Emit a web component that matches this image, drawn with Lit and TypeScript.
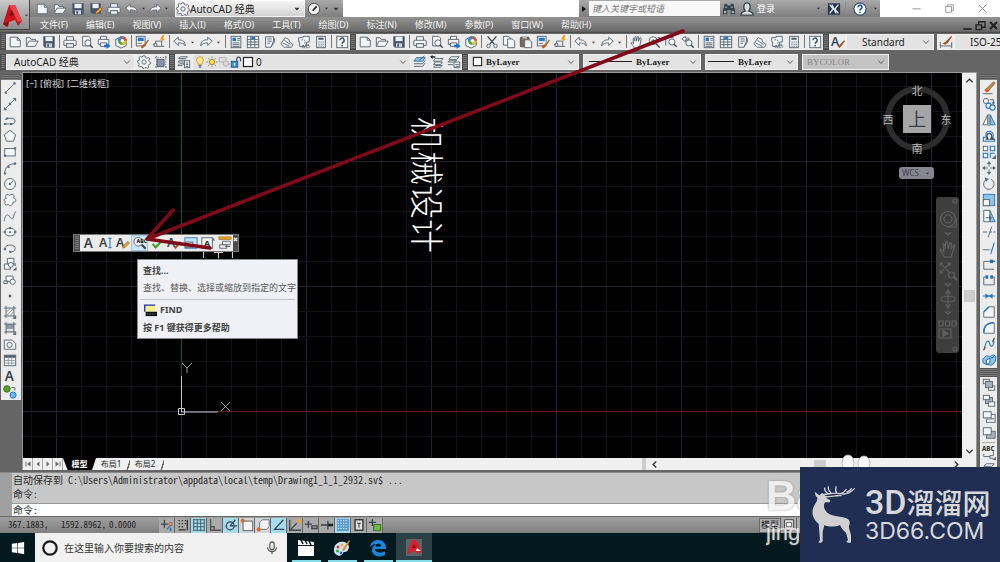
import { LitElement, html, svg, css, nothing, type SVGTemplateResult } from "lit";
import { customElement } from "lit/decorators.js";
import { classMap } from "lit/directives/class-map.js";

/* Every glyph is drawn on a 16 x 16 canvas. d = dark outline, b = blue outline, w = light fill. */
const glyphs: Record<string, SVGTemplateResult> = {
  new: svg`<path class="d w" d="M2.5 2.5h8l3.5 3.5v7.5h-11.5z"/><path class="d" d="M10.5 2.5v3.5h3.5"/>`,
  open: svg`<path class="d w" d="M1.5 13V3h4l1.5 2h5v2"/><path class="d w" d="M1.5 13l3-6h10.5l-3.5 6z"/>`,
  save: svg`<path d="M1.5 1.5h13v13h-11l-2-2z" fill="#46566a"/><rect x="4" y="2" width="8" height="5" fill="#eef1f4"/><rect x="4.5" y="9.5" width="7" height="4.5" fill="#c9d0d8"/><rect x="6" y="10.5" width="2" height="3" fill="#46566a"/>`,
  saveas: svg`<path d="M1.5 1.5h12v12h-10l-2-2z" fill="#46566a"/><rect x="4" y="2" width="7" height="5" fill="#eef1f4"/><path d="M7 14l1-3 5-5 2 2-5 5z" fill="#f0a030" stroke="#7a4a10" stroke-width=".6"/>`,
  print: svg`<path class="d w" d="M4 6V2h8v4M2 6h12a1 1 0 0 1 1 1v5h-3v-2H4v2H1V7a1 1 0 0 1 1-1z"/><rect class="d w" x="4" y="10" width="8" height="4"/>`,
  preview: svg`<path class="d w" d="M3 1.5h7l2 2v9H3z"/><circle class="d w" cx="9" cy="9" r="3.5"/><path class="d2" d="M11.5 11.5l3 3"/>`,
  publish: svg`<path class="d w" d="M4 5V1.500h7V5M1.500 5h12v6h-12z"/><path class="d w" d="M4 9h7v4H4z"/><path d="M8 11h3V9l4.500 3.500L11 16v-2H8z" fill="#1f6fd0"/>`,
  dwf: svg`<path class="d w" d="M2 5l6-3 6 3v7l-6 3-6-3z"/><circle cx="9.5" cy="6.5" r="5" fill="#4aa84a"/><path d="M9.5 6.5V1.500a5 5 0 0 1 5 5z" fill="#e05030"/><path d="M9.5 6.5h5a5 5 0 0 1-5 5z" fill="#f0c030"/><path d="M9.5 6.5h-5a5 5 0 0 1 5-5z" fill="#3a80d8"/><circle cx="9.5" cy="6.5" r="2" fill="#fff"/>`,
  match: svg`<rect class="d w" x="1.5" y="1.5" width="10" height="11"/><rect x="3" y="3" width="7" height="4" fill="#2b7ac0"/><path class="d" d="M3 9.5h5"/><path d="M7 12l4-2 4-5 1 1-4 6-3 3H7z" fill="#b0652a"/>`,
  block: svg`<path class="d" d="M1 11h3V7h7v6h-7M11 13h3"/><rect x="2.5" y="10" width="3" height="3" class="d w"/><path d="M12 0l-3 5h2.5l-1 4 4.5-5h-2.5l2-4z" fill="#f0a020"/>`,
  undo: svg`<path class="d w" d="M1 7l5-4.500v3c5 0 8 1.500 8 7-1.500-3-4-3.500-8-3.500v3z"/>`,
  redo: svg`<path class="d w" d="M15 7l-5-4.500v3c-5 0-8 1.500-8 7 1.500-3 4-3.500 8-3.500v3z"/>`,
  drop: svg`<path d="M3 5.500h10L8 11z" fill="#333"/>`,
  props: svg`<rect class="d w" x="2.5" y="1.5" width="11" height="13"/><rect x="4" y="3" width="4" height="4" fill="#1f78c8"/><path class="d" d="M9.5 4h3M9.5 6h3M4 9h8M4 11h8M4 13h8"/>`,
  dcenter: svg`<rect class="d w" x="1.5" y="1.5" width="13" height="13"/><path class="d" d="M5.500 2v12M10 2v12M1.500 5h13M1.500 8h13M1.500 11h13"/><rect x="6" y="2" width="4" height="3" fill="#2b7ac0"/>`,
  palette: svg`<path class="d w" d="M3 2h9v5l-3 7H3z"/><path class="d" d="M5 4.500h5M5 7h5M5 9.500h3M9 14l4-6V4h-1"/>`,
  sheet: svg`<path class="d w" d="M1 10l5-7 4 2 1 3 4 3-2 3H5z"/><path class="d" d="M3 9l8 4M5 6l7 5"/>`,
  markup: svg`<path class="d w" d="M2 3h5V1.500h7V8h-3v5H3V8H2z"/><path class="d" d="M5 6c3-2 5 0 4 3s4 3 5 1M6 12h8v2.500H6z" stroke-dasharray="2 1"/>`,
  calc: svg`<rect class="d w" x="3" y="1.5" width="10" height="13"/><rect x="5" y="3" width="6" height="2.5" fill="#56646f"/><path class="d" d="M5 8h1.500M7.500 8H9M10 8h1.500M5 10.500h1.500M7.500 10.500H9M10 10.500h1.500M5 12.800h1.500M7.500 12.800H9M10 12.800h1.500"/>`,
  help: svg`<rect class="d w" x="2" y="1.5" width="12.5" height="13"/><path d="M5.500 6a2.500 2.500 0 1 1 3.500 2.300c-.8.400-.8 1-.8 1.700M8.200 11.500v1.500" fill="none" stroke="#33475c" stroke-width="1.600"/>`,
  cut: svg`<path class="d2" d="M3 1.500l7.500 9M13 1.500l-7.500 9"/><circle class="d" cx="4" cy="12.500" r="2"/><circle class="d" cx="12" cy="12.500" r="2"/>`,
  copy: svg`<path class="d w" d="M1.500 1.500h6l2 2v8h-8z"/><path class="d w" d="M6.500 4.500h5.500l2.500 2.500v7.500h-8z"/>`,
  paste: svg`<rect x="1.5" y="2.5" width="10" height="11" rx="1" fill="#7b6a58" stroke="#55493d"/><rect x="4" y="1" width="5" height="3" fill="#b9bfc6"/><path class="d w" d="M6.500 5.500h5.500l2.500 2.500v6.500h-8z"/>`,
  hand: svg`<path class="d w" d="M5 15c-1-3-3-4-4-6 1-1 2 0 3 1L3.500 4c1-1 1.500 0 2 3l.3-5c1-1 1.600 0 1.700 5l1-5.200c1-.6 1.700.2 1.200 5.400L11.500 3c1-.5 1.500.3 1.200 1.500L11.500 11c-.3 2-1 2.500-1 4z"/>`,
  zoomrt: svg`<circle class="d w" cx="7" cy="6.500" r="4.500"/><path class="d2" d="M10.500 10l4 4.500"/><path class="d" d="M5 6.500h4M7 4.500v4M12 3h3"/>`,
  zoomwin: svg`<path class="d" d="M2 12V3h9"/><circle class="d w" cx="9" cy="8" r="3.500"/><path class="d2" d="M11.500 10.500l3 3"/>`,
  zoomprev: svg`<circle class="d w" cx="9" cy="9" r="3.500"/><path class="d2" d="M11.500 11.500l3 3"/><path class="d w" d="M1 4.500L5 1.500v2h4v2H5v2z"/>`,
  tstyle: svg`<text x="0" y="12.5" font-size="14" font-weight="600" fill="#33475c">A</text><path d="M8 13l3-3 4-4 1 1-3.500 5-3 3z" fill="#a5562a"/>`,
  dimstyle: svg`<path class="d" d="M1.500 8v7M14.500 8v7M2 12.500h12"/><path d="M4 10l4-3 6-6 1 1-5 7-3 2z" fill="#a5562a"/>`,
  gear: svg`<path class="d w" d="M6.800 1h2.400l.4 2 1.700.8 1.800-1 1.500 1.700-1.100 1.700.5 1.500 1.500.8v1.500l-2 .7-.7 1.600.8 1.800-1.700 1.300-1.600-1.200-1.400.4L8 15.500H6.800l-.6-2-1.500-.6-1.800.8-1.300-1.500 1-1.700L2 9l-1.500-.8V6.800l2-.6.6-1.600-.8-1.700L3.900 1.600l1.600 1z"/><circle class="d w" cx="8" cy="8" r="2.500"/>`,
  wsnap: svg`<rect x="3.5" y="5" width="8" height="8" fill="#8795a5" stroke="#4c5b6a"/><path class="d" d="M1 3h14M1 13.500h14M3 1v14M13.500 1v14" stroke-dasharray="1.500 1.500"/>`,
  layers: svg`<path class="d w" d="M4 2h8l-2 2H2zM3 6h7l-2 2H1zM3 10h5l-2 2H1z"/><rect class="d w" x="8.5" y="6.5" width="6" height="8"/><path class="d" d="M10 9h3M10 11h3M10 13h3"/>`,
  layercur: svg`<path d="M4 3h10l-3 4H1z" fill="#8fc4ea" stroke="#33618a"/><path class="d" d="M1 10h10l3-4M1 13h10l3-4"/><path d="M7 6l6-5" stroke="#33618a"/>`,
  layerprev: svg`<path class="d w" d="M6 4h9l-3 3H4zM6 8h8l-2 3H4zM6 12h8l-2 2H4z"/><path d="M0 2l3-2v1.500h3v1.500H3v1.500z" fill="#222"/>`,
  layerstate: svg`<path class="d w" d="M5 2h9l-3 3H2zM4 6h7l-2 2H1z"/><path class="d w" d="M8 8h6.500v6.500H8zM1 11h6"/><path class="d" d="M9.500 11h4M9.500 13h4"/>`,
  bulb: svg`<path d="M5.500 11c0-2-2-3-2-5.500a4.500 4.500 0 0 1 9 0c0 2.500-2 3.500-2 5.500z" fill="#ffe88a" stroke="#b58b20"/><path class="d2" d="M6 13h4M7 15h2"/>`,
  sun: svg`<circle cx="8" cy="8" r="3.5" fill="#ffe04a" stroke="#806a20"/><path d="M8 .5v2.500M8 13v2.500M.5 8H3M13 8h2.500M2.700 2.700l1.800 1.800M11.500 11.500l1.800 1.800M13.300 2.700l-1.800 1.800M4.500 11.500l-1.800 1.800" stroke="#8a7320"/>`,
  vpfreeze: svg`<path d="M1.500 2h9v6h-9z" fill="#ddd" stroke="#aaa"/><circle cx="10.5" cy="10" r="3.5" fill="#ddd" stroke="#aaa" stroke-width="2" stroke-dasharray="2 1"/>`,
  lock: svg`<rect x="1.5" y="7" width="9" height="8" fill="#3b8fd0" stroke="#1d4f7c"/><path d="M9 7V4a2.500 2.500 0 0 1 5 0v3" fill="none" stroke="#33475c" stroke-width="1.500"/><rect x="5" y="9.5" width="2" height="3" fill="#fff"/>`,
  swatch: svg`<rect x="2" y="2" width="12" height="12" fill="#fff" stroke="#222" stroke-width="1.600"/>`,
  line: svg`<path class="d" d="M3 13L13 3"/><path class="p" d="M2 12h2.500v2.500H2zM12 1.500h2.500V4H12z"/>`,
  xline: svg`<path class="d" d="M2.500 13.500l11-11"/><path class="p" d="M1 15v-4l4 4zM15 1v4l-4-4zM6.700 6.700h2.600v2.600H6.700z"/>`,
  pline: svg`<path class="d" d="M2 12.500h7M3 6h7c5 0 5 6.500 0 6.500"/><path class="p" d="M1 11.300h2.500v2.500H1zM8 11.300h2.500v2.500H8zM1.500 8l4-3.500v3z"/>`,
  polygon: svg`<path class="d w" d="M8 1.500l6.500 5-2.500 7.500H4L1.500 6.500z"/>`,
  rect: svg`<rect class="d w" x="2" y="4" width="12" height="8.5"/><path class="p" d="M1 11h2.500v2.500H1zM12.500 2.500H15V5h-2.500z"/>`,
  arc: svg`<path class="d" d="M2 14C2 7 7 3 14 3"/><path class="p" d="M1 13h2.500v2.500H1zM5 5.500h2.500V8H5zM12.500 1.800H15v2.500h-2.500z"/>`,
  circle: svg`<circle class="d w" cx="8" cy="8" r="6.3"/><path class="d" d="M8 8l3.500-3.500"/><path class="p" d="M6.800 6.800h2.400v2.400H6.800z"/>`,
  cloud: svg`<path class="d w" d="M4 6C1 3 5 0 7.500 3 10 0 14.500 2 12 5.500c4 1 3 5.500-.5 5 0 4-4 5-5.500 2.500C2.500 15 .5 12 3 10 0 9.500 1 6 4 6z"/>`,
  spline: svg`<path class="d" d="M1.500 14C2 7 5 5 7 8s4 4 5 1 1-5 3-6"/>`,
  ellipse: svg`<ellipse class="d w" cx="8" cy="8" rx="6" ry="4.5"/><path class="p" d="M.8 6.800h2.400v2.400H.8zM12.800 6.800h2.400v2.400h-2.400zM7 2.300h2.200v2.200H7zM7 7h2v2H7z"/>`,
  earc: svg`<path class="d" d="M2 9c0-5.500 12-6 12-.5 0 3-3 4.500-6 4"/><path class="p" d="M1 8h2.500v2.500H1zM7 11h2.500v2.500H7z"/>`,
  insert: svg`<path class="d w" d="M5 1.500h7.500V8H5zM1.500 8h7v6h-7z"/><circle class="d w" cx="9" cy="9" r="2.800"/><path class="d" d="M11 7l3 3M14 10v-3"/><path class="p" d="M15.500 11v4.500H11z"/>`,
  mkblock: svg`<path class="d w" d="M3.500 3.500h8v6h-8z"/><circle class="d w" cx="11" cy="10" r="3"/><path class="d" d="M1 9h4v3H1z"/>`,
  point: svg`<path class="p" d="M6.500 6.500h3v3h-3z"/>`,
  hatch: svg`<path class="d" d="M1 3.500h14M1 12.500h14M3.500 1v14M12.500 1v14"/><path d="M4 8l4-4M4 12l8-8M8 12l4-4" stroke="#8e979e"/><path class="p" d="M15 12v4h-4z"/>`,
  gradient: svg`<rect x="3.5" y="3.5" width="9" height="9" fill="#8e979e"/><path d="M4 9h8v3H4z" fill="#dfe3e6"/><path class="d" d="M1 3.500h14M1 12.500h14M3.500 1v14M12.500 1v14"/><path class="p" d="M15 12v4h-4z"/>`,
  region: svg`<path class="d w" d="M1.500 3.500h9l4 4V14h-13z"/><circle class="d w" cx="7.500" cy="9" r="3"/>`,
  table: svg`<rect class="d w" x="1.5" y="2.5" width="13" height="12"/><rect x="1.5" y="2.5" width="13" height="3" fill="#56646f"/><path d="M2 8.500h12M2 11.500h12M6 5v9M10 5v9" stroke="#8e979e"/>`,
  mtext: svg`<text x="2" y="13.5" font-size="15.5" font-weight="600" fill="#3a434b">A</text>`,
  addsel: svg`<circle cx="4.500" cy="4.500" r="3.700" fill="#55a030" stroke="#2f6a18"/><circle cx="11.500" cy="11.500" r="3.500" fill="#6db8ee" stroke="#1f72b8"/><path class="d" d="M9.500 3h4v3.500"/>`,
  erase: svg`<path d="M4 10L13 1l2 1.500-8 9z" fill="#c98a4a" stroke="#5f3a18" stroke-width=".7"/><path d="M2.500 10.500l2.500-2 3 3-2.500 2z" fill="#e05a30"/><path class="d" d="M1 14.500h11"/>`,
  copyobj: svg`<circle class="d w" cx="4.500" cy="4.500" r="3"/><circle class="b w" cx="7.500" cy="10" r="3"/><circle class="b w" cx="12" cy="12" r="3"/><path class="d" d="M9 3h4v4"/><path class="p" d="M11 6h4l-2 3z"/>`,
  mirror: svg`<path class="d w" d="M6.500 2v11.500H1z"/><path d="M9.500 2v11.500H15z" fill="#8fc4ea" stroke="#1f72b8"/><path class="d" d="M8 1v14"/>`,
  offset: svg`<path class="b" d="M1.500 14h13v-2.500h-3c3-4 1-9-3-9s-5 4-3.500 7h-3.500z"/><path class="d2" d="M4 11.500h3C4 8 6 5 8.500 5s4 4 1.500 6.500h4"/>`,
  array: svg`<rect class="d w" x="1.5" y="1.5" width="5" height="5"/><rect class="b w" x="9.5" y="1.5" width="5" height="5"/><rect class="b w" x="1.5" y="9.5" width="5" height="5"/><path class="b" d="M9.500 14.500v-5h5"/><path class="p" d="M16 11v5h-5z"/>`,
  move: svg`<path class="d" d="M8 2v12M2 8h12"/><path class="p" d="M8 0l2.500 3.500h-5zM8 16l2.500-3.500h-5zM0 8l3.500-2.500v5zM16 8l-3.500-2.500v5z"/><rect x="6.5" y="6.5" width="3" height="3" fill="#eee"/>`,
  rotate: svg`<path class="d" d="M5 2.800a6 6 0 1 0 5-.3"/><path class="p" d="M3 .5L8 2 4.500 5.500z"/>`,
  scale: svg`<rect x="1.5" y="1.5" width="13" height="13" fill="#8fc4ea" stroke="#1f72b8"/><rect class="d w" x="1.5" y="7.5" width="7" height="7"/>`,
  stretch: svg`<path d="M9 1.500l6 13H9z" fill="#8fc4ea" stroke="#1f72b8"/><path class="d w" d="M2 1.500h7v13H2z"/><path class="d" d="M4 10h5"/><path class="p" d="M8 7.500l4 2.500-4 2.500z"/>`,
  trim: svg`<path class="d" d="M1 8h5M7 14l4-12"/><path class="b" d="M9 8h7" stroke-dasharray="2.500 1.500"/>`,
  extend: svg`<path class="d" d="M1 10h5"/><path class="b" d="M6 10h5" stroke-dasharray="2.500 1.500"/><path class="b" d="M10 15l4-13"/>`,
  breakpt: svg`<path class="d" d="M14 5H2v9h12"/><path class="b2" d="M9 5h6"/><path d="M9 3h3.500v4H9z" fill="#1f72b8"/>`,
  brk: svg`<path class="d" d="M4.500 4.500H2v9h12v-9h-2.500"/><path d="M4 2.500h3v4H4zM9.500 2.500h3v4h-3z" fill="#1f72b8"/>`,
  join: svg`<path class="b" d="M1 8h14"/><path d="M4 5l4 3-4 3zM12 5L8 8l4 3z" fill="#1f72b8"/>`,
  chamfer: svg`<path class="d w" d="M2 14V8l6-6h6v12z"/><path class="b2" d="M2 8l6-6"/>`,
  fillet: svg`<path class="d w" d="M2 14c0-8 4-12 12-12v12z"/><path class="b2" d="M2 13C2 6 6 2 13 2"/>`,
  blend: svg`<path class="b" d="M3 12C5 2 8 4 9 8s3 4 5-3"/><path class="d2" d="M1.500 15c1-1 2-2 2-4M12.500 6c0-2 1-4 2-5"/>`,
  explode: svg`<path d="M1 7l4-4 4 1 4-2 3 2-1 6-4 4-6-1-4-2z" fill="#8fc4ea" stroke="#1f72b8"/><path d="M5 8l4-2v5l-4 2zM10 6l4-2" stroke="#145a98" fill="#fff"/>`,
  front: svg`<rect class="d w" x="1.5" y="1.5" width="7" height="5"/><rect class="d w" x="7.5" y="9" width="7" height="5"/><rect x="4" y="4" width="8" height="7" fill="#a8b2bc" stroke="#55626e"/>`,
  back: svg`<rect x="4" y="4" width="8" height="7" fill="#a8b2bc" stroke="#55626e"/><rect class="d w" x="1.5" y="1.5" width="7" height="5"/><rect class="d w" x="7.5" y="9" width="7" height="5"/>`,
  above: svg`<rect class="d w" x="5" y="5" width="10" height="9"/><rect class="d w" x="1.5" y="2" width="9" height="7"/><path d="M5 9h9v2H5z" fill="#8e979e"/>`,
  under: svg`<rect x="5" y="6" width="10" height="8" fill="#a8b2bc" stroke="#55626e"/><rect class="d w" x="1.5" y="2" width="9" height="8"/>`,
  textfront: svg`<text x="0" y="6" font-size="7" font-weight="800" fill="#333">ABC</text><path class="d" d="M2 9v3h7M13 6v5H9v3h4"/><path class="p" d="M16 12v4h-4z"/>`,
  dtext: svg`<text x="0" y="13" font-size="14" font-weight="600" fill="#3a434b">A</text><path class="b" d="M10.500 2.500h4M12.500 2.500v11M10.500 13.500h4"/>`,
  etext: svg`<text x="0" y="13" font-size="14" font-weight="600" fill="#3a434b">A</text><path d="M7.500 14l1-3 5-5 2 2-5 5z" fill="#f0a030" stroke="#7a4a10" stroke-width=".6"/>`,
  find: svg`<circle class="d w" cx="6" cy="6.500" r="5"/><path d="M10 10l4.500 4.500" stroke="#3a434b" stroke-width="2.400"/><rect x="5" y="3.5" width="10" height="5.5" rx="1" fill="#e8eef2"/><text x="4" y="8.5" font-size="6" font-weight="800" fill="#222">ABC</text>`,
  spell: svg`<path d="M3 9l3.500 4L14 5" fill="none" stroke="#3aa020" stroke-width="2.500"/>`,
  tscale: svg`<rect x="1" y="2" width="14" height="12" fill="#bfe0f6" stroke="#2b7ac0"/><rect class="d w" x="2" y="7" width="8" height="6"/><text x="3.5" y="12.5" font-size="6" fill="#333">A</text>`,
  tjust: svg`<rect class="d w" x="1" y="2" width="12" height="12"/><text x="3" y="12" font-size="11" font-weight="700" fill="#333">A</text><path class="p" d="M12 5l2-3 2 3z"/>`,
  space: svg`<rect x="1" y="1" width="14" height="3" fill="#e8a020" stroke="#8a5c10" stroke-width=".6"/><path class="d w" d="M5 6h9v4H5zM2 10h8v4H2z"/><path class="d" d="M8 12h6"/>`,
  clock: svg`<circle cx="8" cy="8" r="6.500" fill="#eee" stroke="#444" stroke-width="1"/><path d="M6.500 10l4.500-5" stroke="#223" stroke-width="2"/>`,
  binoc: svg`<path d="M3 2h3v2h4V2h3l2 8v4h-5V9H6v5H1v-4z" fill="#33424e"/><path d="M3 6h3M10 6h3" stroke="#aab"/><circle cx="3.500" cy="11.500" r="1.500" fill="#aab"/><circle cx="12.500" cy="11.500" r="1.500" fill="#aab"/>`,
  user: svg`<path d="M1 15c0-3 3-4 5-4.500C3 7 4 1 8 1s5 6 2 9.500c2 .5 5 1.500 5 4.500z" fill="#ddd" stroke="#3a4650" stroke-width="1.600"/>`,
  exch: svg`<rect x="1" y="1.5" width="14" height="13" fill="#26374c"/><path d="M3 3l4 5-4 5M13 3L9 8l4 5M5.500 3l5 10" fill="none" stroke="#dfe7f0" stroke-width="1.500"/>`,
  qhelp: svg`<circle cx="8" cy="8" r="7" fill="#f4f7fb" stroke="#35506e" stroke-width="1.300"/><path d="M5.700 6a2.300 2.300 0 1 1 3.300 2c-.8.400-1 .8-1 1.800M8 11v1.600" fill="none" stroke="#1e4fa0" stroke-width="1.800"/>`,
  chev: svg`<path d="M2.500 5l5.500 6 5.500-6" fill="none" stroke="#555" stroke-width="1.800"/>`,
  up: svg`<path d="M3.500 10.500L8 6l4.500 4.500" fill="none" stroke="#333" stroke-width="2"/>`,
  down: svg`<path d="M3.500 5.500L8 10l4.500-4.500" fill="none" stroke="#333" stroke-width="2"/>`,
  left: svg`<path d="M10.500 3.500L6 8l4.500 4.500" fill="none" stroke="#333" stroke-width="2"/>`,
  right: svg`<path d="M5.500 3.500L10 8l-4.500 4.500" fill="none" stroke="#333" stroke-width="2"/>`,
  play: svg`<path d="M4 2v12l8-6z" fill="#111"/>`,
  first: svg`<path d="M3 3h1.800v10H3zM13 3v10L6 8z" fill="#666"/>`,
  prev: svg`<path d="M11 3v10L5 8z" fill="#666"/>`,
  next: svg`<path d="M5 3v10l6-5z" fill="#666"/>`,
  last: svg`<path d="M11.200 3H13v10h-1.800zM3 3v10l7-5z" fill="#666"/>`,
  min: svg`<path d="M2 8.500h12" stroke="#8a8a8a" stroke-width="1.300"/>`,
  restore: svg`<path d="M2.500 5h8.500v8.500H2.500zM5 5V2.500h8.500V11H11" fill="none" stroke="#8a8a8a" stroke-width="1.200"/>`,
  close: svg`<path d="M2.500 2.500l11 11M13.500 2.500l-11 11" stroke="#8a8a8a" stroke-width="1.300"/>`,
  mmin: svg`<path d="M2 13h12" stroke="#222" stroke-width="2.500"/>`,
  mrestore: svg`<path d="M1.500 7h8v7h-8zM5.500 7V2.500h9v8H10" fill="none" stroke="#222" stroke-width="2"/>`,
  mclose: svg`<path d="M3 3l10 10M13 3L3 13" stroke="#222" stroke-width="3"/>`,
  fclose: svg`<path d="M3 3l10 10M13 3L3 13" stroke="#fff" stroke-width="4"/>`,
  infer: svg`<path class="d2" d="M1 7h8M5 2v9"/><path class="b" d="M8 13l4-5"/><circle cx="12" cy="7" r="2" fill="none" stroke="#c05a20"/><path class="b2" d="M12 11v4"/>`,
  snap: svg`<path d="M3 3h1.500M6.500 3H8M10 3h1.500M3 6.500h1.500M6.500 6.500H8M10 6.500h1.500M3 10h1.500M6.500 10H8M3 13.500h8M13 2v12" stroke="#333" stroke-width="1.500"/>`,
  grid: svg`<path d="M1 2h14M1 6h14M1 10h14M1 14h14M2 1v14M6 1v14M10 1v14M14 1v14" stroke="#4a626e" stroke-width="1.200"/>`,
  ortho: svg`<path d="M3 1v13h12M3 10h4v4" fill="none" stroke="#555" stroke-width="1.500"/>`,
  polar: svg`<circle class="d2" cx="7" cy="9" r="4.500"/><path class="d2" d="M7 9h8M7 9l6-7"/>`,
  osnap: svg`<rect x="3.5" y="3.5" width="11" height="11" fill="#f4f4f4" stroke="#555"/><circle cx="3" cy="3" r="2.300" fill="#e06a20"/>`,
  osnap3: svg`<path d="M4 5l3-3h8v8l-3 3H4z" fill="#f0f2f8" stroke="#667"/><circle cx="3" cy="13" r="2.300" fill="#e06a20"/>`,
  otrack: svg`<path class="d2" d="M13 2L3 13h11"/>`,
  ducs: svg`<path class="d2" d="M2 2v12h13M3 13l7-7"/><path d="M9 2l5 5 1-4-2-2z" fill="#f0a030"/>`,
  dyn: svg`<path class="d2" d="M1 7h8M5 3v8M9 9h6v3H9z"/>`,
  lwt: svg`<path class="d2" d="M1 8h8M9 3v10"/><path d="M9 8h6" stroke="#222" stroke-width="3"/>`,
  tpy: svg`<rect x="1" y="1" width="14" height="14" fill="#5f9dcc"/><path d="M2 3h12M2 6h12M2 9h12M2 12h12" stroke="#dff0fa" stroke-dasharray="1.500 1.500"/>`,
  qp: svg`<rect x="3.5" y="2" width="9" height="12" fill="#ddd" stroke="#222" stroke-width="1.400"/><path d="M6 6h4M8 6v5" stroke="#222"/>`,
  sc: svg`<path class="d2" d="M1 5h8M5 1v8"/><rect x="6.5" y="7.5" width="8" height="7" fill="#68b84a" stroke="#2f6a18"/>`,
  layoutpg: svg`<path d="M3 2h10v9l-3 3H3z" fill="#eee" stroke="#333"/><path d="M5 5h6v5H5z" fill="none" stroke="#555"/>`,
  findcmd: svg`<rect x="1" y="2" width="13" height="8" fill="#f4f08a"/><path d="M1 2.500h13M2 2v8" stroke="#2030c0" stroke-width="1.500"/><rect x="3" y="10" width="13" height="5" fill="#111"/><path d="M4 12.500h10" stroke="#778" stroke-dasharray="2 1"/>`,
  mic: svg`<rect x="5.5" y="1" width="5" height="9" rx="2.5" fill="none" stroke="#444" stroke-width="1.200"/><path d="M3 7c0 6.500 10 6.500 10 0M8 12v3" fill="none" stroke="#444" stroke-width="1.200"/>`,
  ring: svg`<circle cx="8" cy="8" r="6.700" fill="none" stroke="#1a1a1a" stroke-width="2.200"/>`,
  windows: svg`<path d="M1 3.200L7.300 2.300v5.300H1zM8 2.200L15 1v6.600H8zM1 8.400h6.300v5.300L1 12.800zM8 8.400h7V15l-7-1.200z" fill="#fff"/>`,
};

const icon = (name: string, cls = "") =>
  html`<svg class="ico ${cls}" viewBox="0 0 16 16" aria-hidden="true">${glyphs[name]}</svg>`;

const shared = css`
  .ico { width: 14px; height: 14px; flex: none; display: block; overflow: visible; font-family: "Noto Sans", sans-serif; }
  .ico.small { width: 11px; height: 11px; }
  .ico.tiny { width: 8px; height: 8px; }
  .ico.micro { width: 5px; height: 5px; }
  .d { fill: none; stroke: #5d6a76; stroke-width: 1.1; }
  .d2 { fill: none; stroke: #3a4650; stroke-width: 1.5; }
  .b { fill: none; stroke: #1f78c8; stroke-width: 1.2; }
  .b2 { fill: none; stroke: #1f78c8; stroke-width: 1.7; }
  .w { fill: #f4f6f8; }
  .p { fill: #5d6a76; }
  button {
    appearance: none; border: 0; padding: 0; margin: 0; background: none; color: inherit;
    font: inherit; display: flex; align-items: center; justify-content: center; flex: none;
  }
`;

/* A strip of tool buttons. "|" draws a divider and "v" a narrow drop-down arrow. */
@customElement("tool-strip")
class ToolStrip extends LitElement {
  static properties = { items: { type: String }, vertical: { type: Boolean, reflect: true }, active: { type: String } };
  declare items: string;
  declare vertical: boolean;
  declare active: string;
  static styles = [
    shared,
    css`
      :host { display: flex; flex: none; background: #ececec; }
      :host([vertical]) { flex-direction: column; }
      .tool { width: 17px; height: 16px; }
      .tool.on { background: #cfe6f6; box-shadow: inset 0 0 0 1px #9cc6e4; }
      .more { width: 9px; height: 16px; }
      .rule { width: 4px; display: flex; justify-content: center; }
      .rule::before { content: ""; width: 1px; height: 13px; margin-top: 1px; background: #777; }
      :host([vertical]) .rule { width: 17px; height: 4px; }
      :host([vertical]) .rule::before { width: 13px; height: 1px; background: #aaa; }
    `,
  ];
  render() {
    return (this.items ?? "").split(" ").map((n) =>
      n === "|" ? html`<span class="rule"></span>`
      : n === "v" ? html`<button class="more" aria-label="more">${icon("drop", "micro")}</button>`
      : html`<button class=${classMap({ tool: true, on: n === this.active })} aria-label=${n}>${icon(n)}</button>`);
  }
}

const STANDARD = "new open save | print preview publish dwf | match block | undo v redo v | props dcenter palette sheet markup calc | help";
const EXTENDED = "new open save | print preview publish dwf | cut copy paste match block | undo v redo v | hand zoomrt zoomwin zoomprev | props dcenter palette sheet markup calc | help";
const DRAW = "line xline pline polygon rect arc circle cloud spline ellipse earc insert mkblock point hatch gradient region table mtext addsel";
const MODIFY = "erase copyobj mirror offset array move rotate scale stretch trim extend breakpt brk join chamfer fillet blend explode";
const MENUS = ["文件(F)", "编辑(E)", "视图(V)", "插入(I)", "格式(O)", "工具(T)", "绘图(D)", "标注(N)", "修改(M)", "参数(P)", "窗口(W)", "帮助(H)"];
const STATUS: [string, string][] = [
  ["infer", ""], ["snap", ""], ["grid", "on"], ["ortho", ""], ["polar", "on"], ["osnap", "lit"], ["osnap3", "lit"],
  ["otrack", "on"], ["ducs", ""], ["dyn", ""], ["lwt", ""], ["tpy", "on"], ["qp", ""], ["sc", ""],
];

@customElement("app-root")
class AppRoot extends LitElement {
  static styles = [
    shared,
    css`
      :host {
        display: grid; grid-template-rows: 33px 18px 21px minmax(0, 1fr) 44px 17px 29px;
        position: relative; height: 100vh; min-height: 420px; overflow: hidden; background: #656565;
        font: 9px/12px "Noto Sans", "Noto Sans CJK SC", sans-serif; color: #222;
      }
      .head { display: grid; grid-template-columns: 30px minmax(0, 1fr); background: linear-gradient(#8a8a8a, #6f6f6f 50%, #929292 52%, #6b6b6b 94%, #444); }
      .app { width: 30px; height: 30px; align-self: start; background: linear-gradient(#c8c8c8, #8a8a8a); box-shadow: inset -1px -1px #444; }
      .logo-a { width: 22px; height: 26px; flex: none; }
      .bars { display: grid; grid-template-rows: 17px 16px; min-width: 0; }
      .title { display: flex; align-items: center; min-width: 0; background: #fff; }
      .quick { display: flex; align-items: center; height: 17px; gap: 4px; padding-left: 5px; background: linear-gradient(#a9a9a9, #7d7d7d); width: 145px; box-sizing: border-box; flex: none; }
      .quick .pair { display: flex; }
      .quick .pair .more { width: 9px; }
      .combo { position: relative; display: flex; align-items: center; background: #e3e3e3; color: #222; height: 16px; min-width: 0; flex: none; box-shadow: inset 0 0 0 1px #f2f2f2; }
      .combo select {
        appearance: none; border: 0; outline: 0; background: transparent; flex: 1; height: 16px; min-width: 0;
        padding: 0 14px 0 5px; margin: 0; font: inherit; color: inherit; opacity: 1;
      }
      .combo .arrow { position: absolute; right: 4px; pointer-events: none; }
      .ws-title { width: 130px; font-size: 10px; background: linear-gradient(#f5f5f5, #d0d0d0); padding-left: 1px; box-sizing: border-box; }
      .ws-title select { padding-left: 0; }
      .quick.after { width: 38px; padding-left: 2px; gap: 3px; }
      .fill { flex: 1; }
      .info { display: flex; align-items: center; height: 17px; background: linear-gradient(#a9a9a9, #7d7d7d); color: #fff; flex: none; width: 301px; }
      .info .go { width: 10px; }
      .info input { width: 131px; height: 15px; box-sizing: border-box; border: 0; padding: 0 3px; font: italic 9px/12px "Noto Sans CJK SC", sans-serif; background: #f8f8f8; }
      .info input::placeholder { color: #777; opacity: 1; }
      .info .tb { width: 18px; }
      .info .login { width: 20px; }
      .info .far { margin-left: auto; }
      .info .xch { width: 22px; margin-left: 2px; box-shadow: 1px 0 #888; }
      .info .qh { width: 22px; margin-left: 4px; }
      .info .end { width: 9px; }
      .window { display: flex; width: 120px; flex: none; gap: 22px; justify-content: center; padding-left: 18px; box-sizing: border-box; }
      .menu { display: flex; align-items: center; gap: 18px; padding: 0 1px 0 10px; color: #f2f2f2; }
      .menu .mdi { display: flex; gap: 2px; margin-left: auto; }

      .row { display: flex; align-items: center; min-width: 0; overflow: hidden; }
      .grip { width: 6px; height: 16px; flex: none; background: repeating-linear-gradient(#555 0 1px, #777 1px 2px); box-shadow: inset 0 0 0 1px #4a4a4a; }
      .std { width: 88px; font-size: 10px; }
      .std select { padding-left: 16px; }
      .iso { flex: 1 0 88px; }
      .ws { width: 129px; font-size: 10px; }
      .ws select { padding-left: 8px; }
      .gap { width: 3px; flex: none; }
      .layer { width: 219px; font-size: 10px; padding-left: 2px; box-sizing: border-box; }
      .layer select { padding-left: 2px; }
      .lead { display: flex; align-items: center; flex: none; }
      .lead .ico { width: 12px; height: 12px; }
      .serif { font: bold 9px/12px "Liberation Serif", serif; }
      .color { width: 111px; padding-left: 4px; box-sizing: border-box; }
      .color select { padding-left: 3px; }
      .ltype { width: 118px; margin-left: 4px; }
      .lweight { width: 93px; margin-left: 4px; }
      .ltype select, .lweight select { padding-left: 4px; }
      .sample { height: 1px; background: #222; flex: none; width: 43px; margin-left: 6px; }
      .lweight .sample { width: 26px; margin-left: 3px; }
      .off { width: 87px; margin-left: 4px; background: #c3c3c3; color: #888; font-weight: normal; }

      .work { display: grid; grid-template-columns: 22px minmax(0, 1fr) 23px; min-height: 0; }
      .dock { overflow: hidden; padding: 2px 1px 0 1px; }
      .dock.right { padding: 2px 3px 0; }
      .dock .bar { height: 6px; width: 17px; background: repeating-linear-gradient(#555 0 1px, #7d7d7d 1px 2px); }
      .dock .bar.second { height: 9px; }
      .view { display: grid; grid-template: minmax(0, 1fr) 12px / minmax(0, 1fr) 14px; border: 1px solid #9a9a9a; border-bottom: 0; margin-bottom: 2px; min-height: 0; }
      .canvas { position: relative; background: #000; overflow: hidden; }
      .scene { position: absolute; left: 0; top: 0; width: 100%; height: 100%; }
      .label { position: absolute; left: 3px; top: 5px; color: #d8d8d8; display: flex; gap: 3px; }
      .word {
        position: absolute; left: 388px; top: 44px; writing-mode: vertical-rl; text-orientation: sideways;
        font: 400 34px/34px "Noto Sans CJK SC", sans-serif; font-weight: 300; color: #fff;
      }
      .cube { position: absolute; right: 9px; top: 10px; width: 72px; height: 72px; display: grid; place-items: center; font: 11px/12px "Noto Sans CJK SC", sans-serif; color: #bbb; grid-template: 14px 1fr 14px / 14px 1fr 14px; }
      .ring { position: absolute; left: 4px; top: 3px; width: 53px; height: 53px; border: 6px solid #2d2d2d; border-radius: 50%; }
      .cube span { position: relative; }
      .north { grid-area: 1 / 2; } .west { grid-area: 2 / 1; } .east { grid-area: 2 / 3; } .south { grid-area: 3 / 2; }
      .cube .top { grid-area: 2 / 2; width: 28px; height: 28px; background: #a5a5a5; color: #3c3f46; font-size: 18px; line-height: 26px; text-align: center; }
      .wcs { position: absolute; right: 28px; top: 94px; width: 35px; height: 12px; background: #85858f; border-radius: 3px; color: #44444e; padding: 0 4px 0 3px; box-sizing: border-box; justify-content: space-between; font-size: 8px; }
      .nav { position: absolute; right: 3px; top: 124px; width: 23px; height: 156px; background: #3e3e3e; border-radius: 3px; }
      .vscroll { background: #f0f0f0; display: grid; grid-template-rows: 14px 203px 12px 1fr 14px; place-items: center; }
      .vscroll .thumb { background: #cdcdcd; width: 11px; height: 12px; grid-row: 3; }
      .vscroll .dn { grid-row: 5; }
      .tabs { grid-column: 1 / -1; display: flex; align-items: center; background: #f0f0f0; min-width: 0; }
      .tabs .step { width: 10px; height: 12px; box-shadow: inset -1px 0 #aaa; }
      .tabs .tab { height: 12px; width: 34px; font-size: 8px; padding-right: 4px; background: linear-gradient(108deg, transparent 0 90%, #666 91% 94%, transparent 95%); }
      .tabs .model { background: #000; color: #fff; clip-path: polygon(0 0, 100% 0, 88% 100%, 14% 100%); font-weight: bold; padding: 0; width: 33px; }
      .hscroll { margin-left: auto; width: 334px; height: 12px; display: flex; align-items: center; box-shadow: inset 4px 0 #ccc; padding: 0 14px 0 7px; box-sizing: border-box; }
      .hscroll .thumb { width: 12px; height: 9px; background: #cdcdcd; margin: 0 auto 0 154px; }

      .command { display: grid; grid-template-columns: 12px minmax(0, 1fr); background: #a0a0a0; font: 10px/11px "Noto Sans Mono CJK SC", "Noto Sans CJK SC", monospace; box-shadow: inset 0 1px #888; color: #2b2b2b; padding-top: 1px; }
      .log { background: #c7c7c7; padding: 0 1px; height: 30px; box-sizing: border-box; }
      .log p { margin: 0; white-space: pre; line-height: 14px; }
      .entry { display: flex; align-items: center; background: #fff; height: 13px; padding-left: 1px; box-shadow: inset 0 1px #999; }
      .entry input { flex: 1; min-width: 0; border: 0; padding: 0; height: 11px; font: inherit; outline: 0; background: none; }
      .status { display: flex; align-items: center; background: linear-gradient(#a2a2a2, #808080); box-shadow: inset 0 1px #666; padding-top: 1px; }
      .coords { width: 159px; flex: none; padding-left: 8px; box-sizing: border-box; font: 9px/14px "Noto Sans Mono CJK SC", monospace; white-space: pre; display: flex; }
      .coords span { width: 53px; }
      .coords span + span { width: 48px; }
      .status .tg { width: 16px; height: 15px; box-shadow: inset -1px 0 #666; background: #a9a9a9; }
      .status .tg.on { background: #a5dcee; }
      .status .tg.lit { background: #cfd6da; }
      .status .model { width: 22px; height: 15px; background: #b0b0b0; box-shadow: inset 0 0 0 1px #666; }
      .status .end { width: 241px; display: flex; margin-left: auto; }

      .task { display: flex; background: #04191d; }
      .start { width: 35px; }
      .seek { width: 252px; background: #f1f1f1; display: flex; align-items: center; padding: 0 8px 0 7px; box-sizing: border-box; gap: 6px; flex: none; }
      .seek .ring-ico { width: 16px; height: 16px; }
      .seek input { flex: 1; min-width: 0; border: 0; background: none; padding: 0; font: 10px/14px "Noto Sans CJK SC", sans-serif; outline: 0; }
      .seek input::placeholder { color: #333; opacity: 1; }
      .pins { display: flex; padding-left: 1px; }
      .pin { width: 36px; height: 29px; background: linear-gradient(#83dce8, #83dce8) center bottom / 29px 2px no-repeat; }
      .pin.cur { background-color: #2c4145; background-size: 36px 2px; }
      .pin svg { width: 18px; height: 20px; }

      .float { position: absolute; left: 74px; top: 235px; height: 16px; display: flex; box-shadow: 0 0 0 1px #777; background: #4c4c4c; }
      .float .x { width: 5px; height: 9px; }
      .tip { position: absolute; left: 137px; top: 259px; width: 161px; height: 80px; box-sizing: border-box; background: #f0f1f7; border: 1px solid #888; padding: 5px 2px 0; color: #444; white-space: nowrap; }
      .tip p { margin: 0 0 5px; padding-left: 3px; line-height: 12px; display: flex; gap: 3px; align-items: center; }
      .tip .rest { color: #555; }
      .tip hr { border: 0; border-top: 1px solid #bfc1c8; margin: 0 0 3px; }
      .mark { position: absolute; left: 0; top: 0; width: 1000px; height: 562px; pointer-events: none; }
      .ears { position: absolute; right: 125px; bottom: 90px; width: 40px; height: 18px; }
      .water { position: absolute; right: 200px; bottom: 0; width: 34px; height: 90px; overflow: hidden; color: #f4f4f4; opacity: .85; text-shadow: 0 0 2px #777; font-family: "Liberation Sans", sans-serif; }
      .water b { display: block; font-size: 42px; line-height: 48px; }
      .water span { display: block; font-size: 22px; line-height: 26px; }
      .brand { position: absolute; right: 0; bottom: 0; width: 200px; height: 95px; background: #212e54; color: #d8d8d8; display: flex; align-items: center; }
      .deer { width: 65px; height: 95px; flex: none; }
      .names { display: grid; }
      .zh { font: 500 28px/32px "Noto Sans CJK SC", sans-serif; display: flex; align-items: center; }
      .zh b { font: 500 34px/32px Roboto, sans-serif; }
      .com { font: 23px/26px Inter, sans-serif; }
    `,
  ];

  private combo(cls: string, label: string, value: string, lead: unknown = nothing, disabled = false, arrow = "chev") {
    return html`<label class="combo ${cls}">${lead}<select aria-label=${label} ?disabled=${disabled}><option>${value}</option></select>${icon(arrow, "tiny arrow")}</label>`;
  }

  private scene() {
    const tone = (k: number) => (k % 5 === 0 ? "#202234" : "#121319");
    const cols = Array.from({ length: 80 }, (_, k) => k);
    const rows = Array.from({ length: 60 }, (_, k) => k);
    return html`<svg class="scene" aria-hidden="true">
      ${cols.map((k) => svg`<path d="M${8.5 + k * 25} 0v2000" stroke=${tone(k - 1)}></path>`)}
      ${rows.map((k) => svg`<path d="M0 ${13.5 + k * 25}h3000" stroke=${tone(k - 3)}></path>`)}
      <path d="M158.500 0v302" stroke="#1c561c"/><path d="M194 338.500h3000" stroke="#6a2024"/>
      <path d="M158.500 303v36h36M155.500 335.500h6v6h-6z" fill="none" stroke="#ccc"/>
      <path d="M159 290l5 5 5-5M164 295v5M198 329l9 9M207 329l-9 9" fill="none" stroke="#999"/>
      <path d="M180.500 176v9M209.500 176v9M191 179.500h9M195.500 179.500v6" stroke="#ccc"/>
    </svg>`;
  }

  private navArt() {
    return html`<svg class="nav" viewBox="0 0 23 156" fill="none" stroke="#606060" stroke-width="1.200" aria-hidden="true">
      <circle cx="19" cy="4" r="2"/><circle cx="12" cy="22" r="7.500"/><circle cx="12" cy="22" r="4"/><path d="M12 30h8v-8"/>
      <path d="M9.500 36h5l-2.500 2zM9.500 87h5l-2.500 2zM9.500 115h5l-2.500 2z" fill="#222"/>
      <path d="M8 60c-1-4-4-5-4-8 2 0 3 2 4 3l-1-8c1-1 2 0 2 5l1-7c1-1 2 0 2 7l2-6c1-1 2 0 1 6l3-4c1 0 1 1 0 3l-3 9z"/>
      <path d="M4 66l10 10M14 66L4 76M4 69v-3h3M11 66h3v3M4 73v3h3"/><circle cx="15.500" cy="78" r="3"/><path d="M18 80l3 3" stroke-width="2"/>
      <path d="M12 94v16M9.500 97l2.500-4 2.500 4M9.500 107l2.500 4 2.500-4M5 102c0-4 14-4 14 0s-14 4-14 0"/>
      <path d="M3 124h4v5H3zM9.500 124h4v5h-4zM16 124h4v5h-4zM3 132h12v9H3z"/><path d="M7 133.500v6l5-3z" fill="#606060"/><circle cx="19" cy="152" r="2"/>
    </svg>`;
  }

  render() {
    const strip = (items: string, active = "") => html`<tool-strip .items=${items} .active=${active}></tool-strip>`;
    const dock = (items: string) => html`<tool-strip vertical .items=${items}></tool-strip>`;
    const btn = (name: string, cls = "", size = "") => html`<button class=${cls} aria-label=${name}>${icon(name, size)}</button>`;
    return html`
      <header class="head">
        <button class="app" aria-label="AutoCAD">
          <svg class="logo-a" viewBox="0 0 22 26" aria-hidden="true"><path d="M1 22L7 3h6l7 16-4 5-3-6-6 2-1 5z" fill="#c8141c"/><path d="M7 3h6l7 16-4 1z" fill="#e8434a"/><path d="M7 14l3-6 2 5z" fill="#7c0a10"/><path d="M1 22l4 3 2-6z" fill="#8e0c12"/></svg>
          ${icon("drop", "micro")}
        </button>
        <div class="bars">
          <div class="title">
            <div class="quick">
              ${["new", "open", "save", "saveas", "print"].map((n) => btn(n))}
              <span class="pair">${btn("undo")}${btn("drop", "more", "micro")}${btn("redo")}${btn("drop", "more", "micro")}</span>
            </div>
            ${this.combo("ws-title", "工作空间", "AutoCAD 经典", icon("gear"), false, "drop")}
            <div class="quick after">${btn("clock")}${btn("drop", "", "micro")}${btn("drop", "", "tiny")}</div>
            <span class="fill"></span>
            <div class="info">
              ${btn("play", "go", "tiny")}
              <input aria-label="搜索" placeholder="键入关键字或短语">
              ${btn("binoc", "tb")}${btn("user", "tb")}
              <button class="login">登录</button>
              ${btn("drop", "far", "micro")}${btn("exch", "xch")}${btn("qhelp", "qh")}${btn("drop", "end", "micro")}
            </div>
            <div class="window">${btn("min", "", "small")}${btn("restore", "", "small")}${btn("close", "", "small")}</div>
          </div>
          <nav class="menu">
            ${MENUS.map((m) => html`<button>${m}</button>`)}
            <div class="mdi">${btn("mmin", "", "small")}${btn("mrestore", "", "small")}${btn("mclose", "", "small")}</div>
          </nav>
        </div>
      </header>

      <div class="row">
        <span class="grip"></span>${strip(STANDARD)}
        <span class="grip"></span>${strip(EXTENDED)}
        <span class="grip"></span>${strip("tstyle")}
        ${this.combo("std", "文字样式", "Standard")}<span class="gap"></span>
        ${strip("dimstyle")}${this.combo("std iso", "标注样式", "ISO-25")}
      </div>

      <div class="row">
        <span class="grip"></span>${this.combo("ws", "工作空间", "AutoCAD 经典")}${strip("gear wsnap")}
        <span class="grip"></span>${strip("layers")}
        ${this.combo("layer", "图层", "0", html`<span class="lead">${["bulb", "sun", "vpfreeze", "lock", "swatch"].map((n) => icon(n))}</span>`)}
        ${strip("layercur layerprev layerstate")}
        <span class="grip"></span>
        ${this.combo("color serif", "颜色", "ByLayer", icon("swatch", "small"))}
        ${this.combo("ltype serif", "线型", "ByLayer", html`<span class="sample"></span>`)}
        ${this.combo("lweight serif", "线宽", "ByLayer", html`<span class="sample"></span>`)}
        ${this.combo("serif off", "打印样式", "BYCOLOR", nothing, true)}
      </div>

      <main class="work">
        <div class="dock"><div class="bar"></div>${dock(DRAW)}</div>
        <section class="view">
          <div class="canvas">
            ${this.scene()}
            <div class="label"><span>[−]</span><span>[俯视]</span><span>[二维线框]</span></div>
            <div class="word">机械设计</div>
            <div class="cube">
              <i class="ring"></i>
              <span class="north">北</span><span class="west">西</span><span class="top">上</span><span class="east">东</span><span class="south">南</span>
            </div>
            <button class="wcs">WCS ${icon("drop", "micro")}</button>
            ${this.navArt()}
          </div>
          <div class="vscroll">${icon("up", "small")}<span class="thumb"></span>${icon("down", "small dn")}</div>
          <div class="tabs">
            ${["first", "prev", "next", "last"].map((n) => btn(n, "step", "tiny"))}
            <button class="tab model">模型</button><button class="tab">布局1</button><button class="tab">布局2</button>
            <div class="hscroll">${icon("left", "small")}<span class="thumb"></span>${icon("right", "small")}</div>
          </div>
        </section>
        <div class="dock right"><div class="bar"></div>${dock(MODIFY)}<div class="bar second"></div>${dock("front back above under | textfront layerstate")}</div>
      </main>

      <section class="command">
        <span></span>
        <div>
          <div class="log"><p>自动保存到 C:\\Users\\Administrator\\appdata\\local\\temp\\Drawing1_1_1_2932.sv$ ...</p><p>命令:</p></div>
          <div class="entry"><label for="cmd">命令:</label><input id="cmd"></div>
        </div>
      </section>

      <div class="status">
        <div class="coords"><span>367.1883,</span><span>1592.8962,</span><span>0.0000</span></div>
        ${STATUS.map(([n, state]) => btn(n, "tg " + state))}
        <div class="end"><button class="model">模型</button>${btn("layoutpg", "tg")}${btn("qp", "tg")}</div>
      </div>

      <footer class="task">
        ${btn("windows", "start")}
        <label class="seek">${icon("ring", "ring-ico")}<input aria-label="搜索" placeholder="在这里输入你要搜索的内容">${icon("mic")}</label>
        <div class="pins">
          <button class="pin" aria-label="video"><svg viewBox="0 0 18 20" aria-hidden="true"><path d="M1 8h16v10H1z" fill="#fff"/><path d="M1 2l16 2v3H1z" fill="#fff"/><path d="M4 2l2 4M8 2l2 4M12 3l2 4" stroke="#04191d" stroke-width="1.600"/></svg></button>
          <button class="pin" aria-label="paint"><svg viewBox="0 0 18 20" aria-hidden="true"><path d="M1 12C1 6 6 3 11 4s6 5 4 8-4 1-5 3-3 4-6 2-3-3-3-5z" fill="#cfe6f5"/><circle cx="5" cy="9" r="1.500" fill="#d33"/><circle cx="9" cy="7" r="1.500" fill="#e9b020"/><circle cx="4.500" cy="13" r="1.500" fill="#3a3"/><circle cx="8" cy="15" r="1.400" fill="#36c"/><path d="M9 12l7-10 1 1-6 10z" fill="#d88a30"/></svg></button>
          <button class="pin" aria-label="edge"><svg viewBox="0 0 18 20" aria-hidden="true"><path d="M1 9C2 4 5 2 9 2c5 0 8 3 8 9H6c0 3 5 5 10 2.500V17c-6 3-13 1-13-5 0-3 2-5 5-6C5 6 2.500 7 1 9zm5.500-.5H12c0-4-5-4-5.500 0z" fill="#1b84dd"/></svg></button>
          <button class="pin cur" aria-label="autocad"><svg viewBox="0 0 18 20" aria-hidden="true"><rect x="1" y="1" width="16" height="17" fill="#5d6468"/><path d="M2 15L7 2h4l6 12-4 2-3-3-4 1-1 2z" fill="#d8202a"/><path d="M7 10l2-4 2 4z" fill="#7c0a10"/><path d="M12 10l4 3h-5z" fill="#fff"/></svg></button>
        </div>
      </footer>

      <div class="float">
        <span class="grip"></span>${strip("mtext dtext etext find spell tstyle tscale tjust space", "find")}
        ${btn("fclose", "x", "micro")}
      </div>
      <div class="tip" role="tooltip">
        <p><b>查找...</b></p><p class="rest">查找、替换、选择或缩放到指定的文字</p><hr>
        <p>${icon("findcmd")}<b>FIND</b></p><p><b>按 F1 键获得更多帮助</b></p>
      </div>
      <svg class="ears" viewBox="0 0 40 18" aria-hidden="true"><ellipse cx="13" cy="9" rx="6" ry="8" fill="#fff" stroke="#bbb"/><ellipse cx="29" cy="10" rx="6" ry="8" fill="#fff" stroke="#bbb"/></svg>
      <div class="water" aria-hidden="true"><b>Bai</b><span>jing</span></div>
      <aside class="brand">
        <svg class="deer" viewBox="480 51 195 285" aria-hidden="true">
          <path fill="#d0d0d0" d="M524 125L538 136C545 127 556 131 560 145L571 151L569 157L556 157C548 164 553 178 558 184C566 198 596 199 617 204C629 208 632 216 627 228C625 236 632 246 633 256V278H624L619 275L624 270L618 248C610 242 604 234 600 225C588 231 566 231 553 226L548 245L548 274L543 279L535 277L540 270L536 222C524 211 515 197 518 180C521 163 534 153 532 143C526 139 526 132 524 125Z"/>
          <path d="M543 132C560 137 578 124 602 131C618 135 631 129 644 115M563 130C555 124 553 118 554 113M573 128C564 121 564 115 565 109M590 129C584 121 587 115 589 109M602 130C610 130 616 122 619 117M619 127C629 123 633 119 635 115M548 139C567 144 588 134 605 137" fill="none" stroke="#d0d0d0" stroke-width="4"/>
        </svg>
        <div class="names"><div class="zh"><b>3D</b>溜溜网</div><div class="com">3D66.COM</div></div>
      </aside>
      <svg class="mark" viewBox="0 0 1000 562" aria-hidden="true">
        <path d="M683 31L147 239L173 210M147 239L210 248" fill="none" stroke="#800a1a" stroke-width="3.500" stroke-linecap="round" stroke-linejoin="round"/>
      </svg>
    `;
  }
}
